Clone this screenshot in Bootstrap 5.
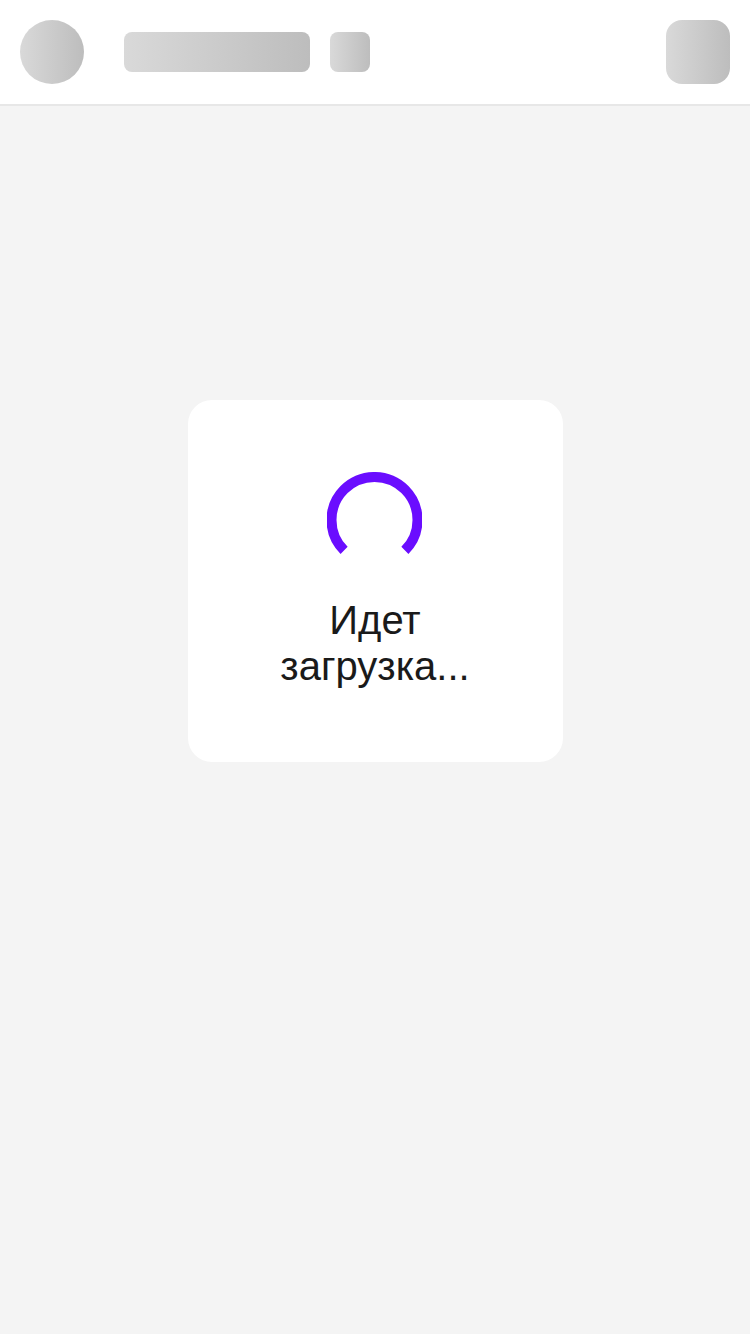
<!DOCTYPE html>
<html lang="ru">
<head>
<meta charset="utf-8">
<meta name="viewport" content="width=device-width, initial-scale=1">
<title>Идет загрузка...</title>
<link href="https://cdn.jsdelivr.net/npm/bootstrap@5.3.0/dist/css/bootstrap.min.css" rel="stylesheet">
<style>
  body {
    background: #f4f4f4;
    color: #1a1a1a;
    font-family: "Liberation Sans", Arial, sans-serif;
  }
  .top-bar {
    padding: 20px;
    border-bottom: 2px solid #e7e7e7;
  }
  .skeleton {
    height: 40px;
    border-radius: 8px;
    background: linear-gradient(to right, #d9d9d9, #bdbdbd);
  }
  .skeleton-title { width: 186px; margin-left: 40px; }
  .skeleton-chip { width: 40px; margin-left: 20px; }
  .skeleton-avatar { width: 64px; height: 64px; border-radius: 50%; }
  .skeleton-menu { width: 64px; height: 64px; border-radius: 16px; }
  .loader-area { padding-top: 294px; }
  .loader-card {
    padding: 72px 72px 73px;
    gap: 29px;
    border-radius: 24px;
  }
  .loader-text {
    font-size: 40px;
    line-height: 46px;
  }
</style>
</head>
<body class="min-vh-100 d-flex flex-column">
  <header class="top-bar bg-white d-flex align-items-center" aria-hidden="true">
    <div class="skeleton skeleton-avatar flex-shrink-0"></div>
    <div class="skeleton skeleton-title"></div>
    <div class="skeleton skeleton-chip"></div>
    <div class="skeleton skeleton-menu flex-shrink-0 ms-auto"></div>
  </header>
  <main class="loader-area flex-grow-1 d-flex justify-content-center align-items-start">
    <div class="loader-card w-50 bg-white d-flex flex-column align-items-center text-center" role="status">
      <svg width="96" height="96" viewBox="0 0 96 96" fill="none" aria-hidden="true">
        <svg width="95" height="96">
          <path d="M17.1 78.4A43 43 0 1 1 77.9 78.4" stroke="#6a0dff" stroke-width="10"/>
        </svg>
      </svg>
      <p class="loader-text mb-0">Идет загрузка...</p>
    </div>
  </main>
<script src="https://cdn.jsdelivr.net/npm/bootstrap@5.3.0/dist/js/bootstrap.bundle.min.js"></script>
</body>
</html>
